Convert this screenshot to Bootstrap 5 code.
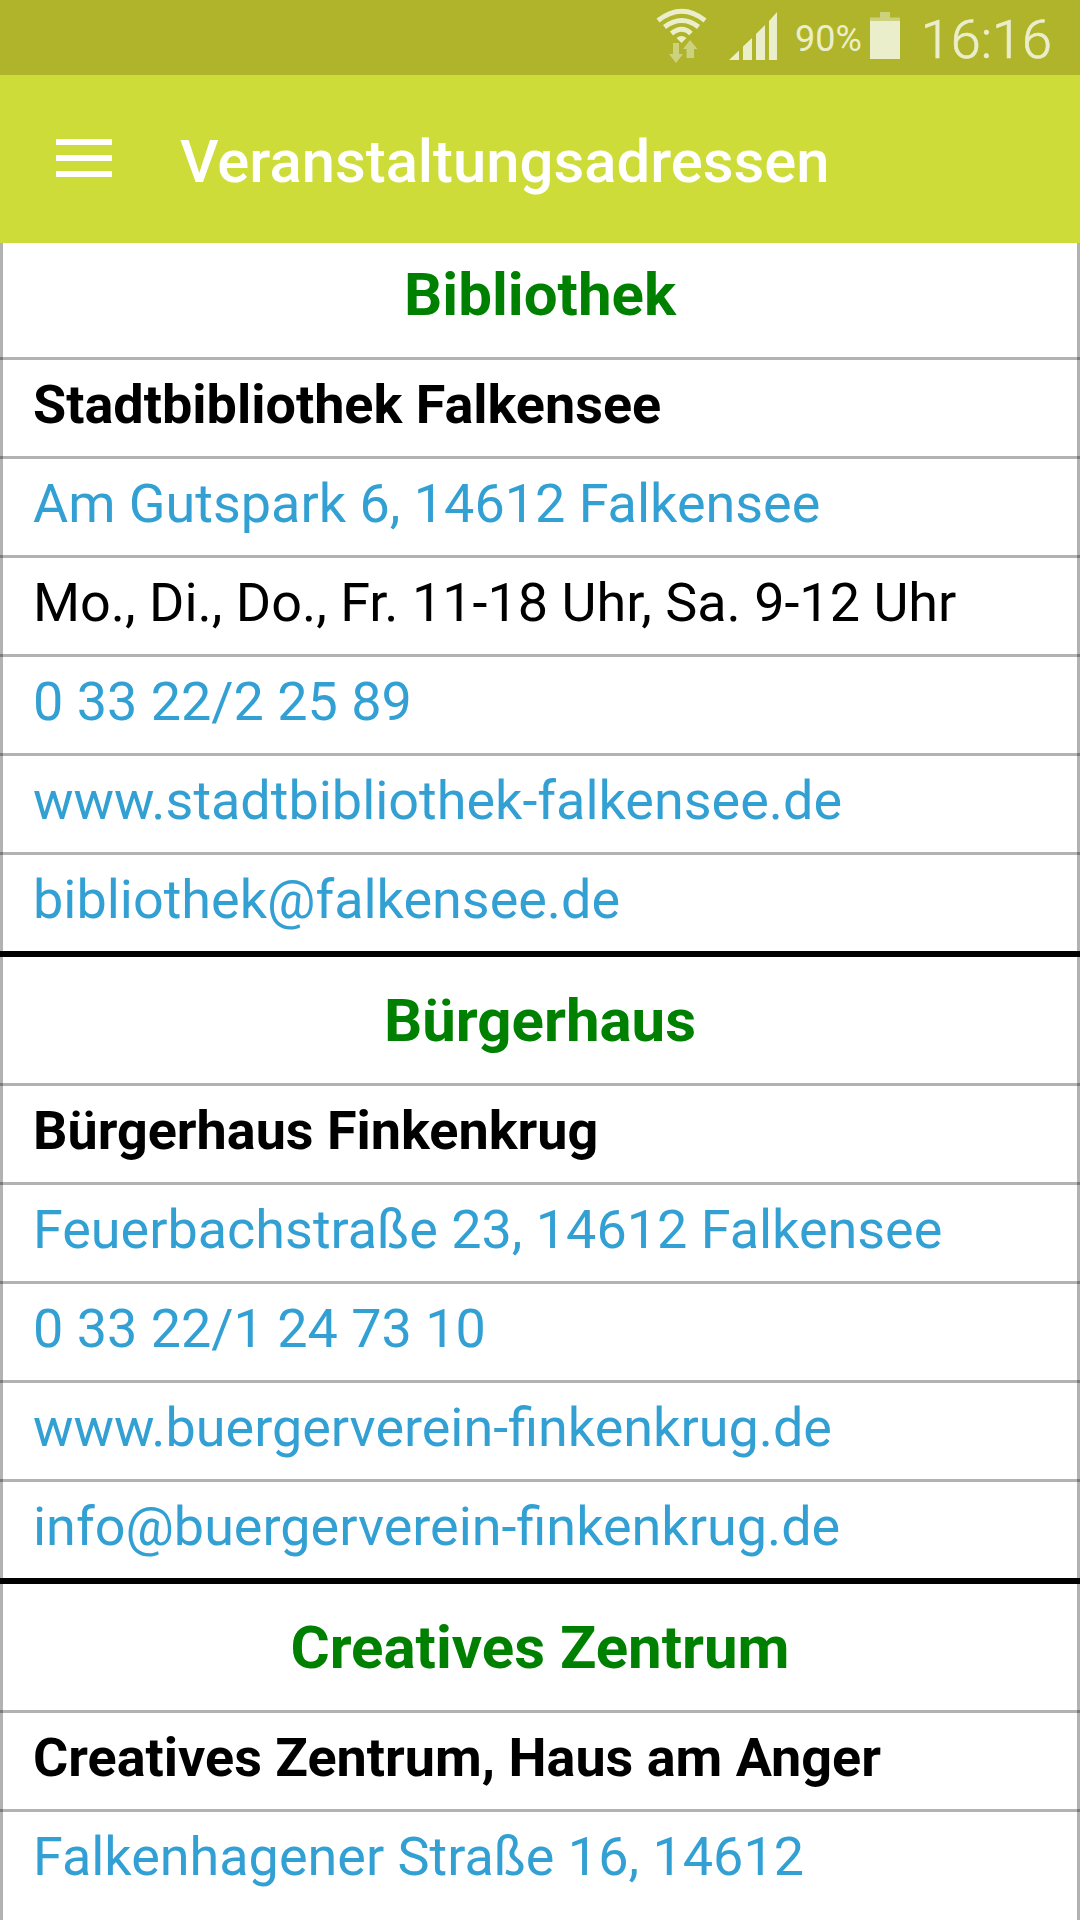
<!DOCTYPE html>
<html lang="de">
<head>
<meta charset="utf-8">
<meta name="viewport" content="width=device-width, initial-scale=1">
<title>Veranstaltungsadressen</title>
<link href="https://cdn.jsdelivr.net/npm/bootstrap@5.3.0/dist/css/bootstrap.min.css" rel="stylesheet">
<style>
body { font-family: Roboto, "Noto Sans", sans-serif; height: 1920px; overflow: hidden; color: #000; }
.statusbar { height: 75px; background: #afb42b; color: #ebeecb; padding-right: 28px; }
.st-icon { display: block; flex: none; }
.st-percent { font-size: 36px; line-height: 75px; margin: 2px 8px 0 5px; }
.st-clock { font-size: 54px; line-height: 79px; margin-left: 21px; font-weight: 300; -webkit-text-stroke: .7px #ebeecb; }
.appbar { height: 168px; background: #cddc39; padding: 0 56px; }
.menu-btn { width: 56px; line-height: 0; margin-top: -2px; }
.appbar h1 { font-size: 59.8px; font-weight: 500; line-height: 70px; margin-left: 68px; padding-top: 5px; }
.addresses { height: 1677px; border: solid rgba(0,0,0,.3); border-width: 0 3px; overflow: visible; }
.addr-row, .addr-head { margin: 0 -3px; padding: 0 33px; border-bottom: 3px solid rgba(0,0,0,.3); white-space: nowrap; }
.addr-row { height: 99px; font-size: 53.94px; line-height: 90px; }
.addr-head { height: 129px; font-size: 60px; line-height: 127px; font-weight: 700; color: #008000; text-align: center; }
.addr-group:first-child .addr-head { height: 117px; line-height: 103px; }
.addr-group:not(:last-child) .addr-row:last-child { height: 102px; border-bottom: 6px solid #000; }
.addr-group:last-child .addr-row:last-child { border-bottom: 0; }
a.addr-row { color: #33a0d4; }
</style>
<script src="https://cdn.jsdelivr.net/npm/bootstrap@5.3.0/dist/js/bootstrap.bundle.min.js"></script>
</head>
<body class="bg-white">
<div class="statusbar d-flex justify-content-end">
  <svg class="st-icon" width="150" height="75" viewBox="0 0 150 75">
    <g fill="none" stroke="#ebeecb" stroke-width="5">
      <path d="M18 20.5Q42 2 65 20.5"/>
      <path d="M24.500 27Q42 14 58.500 27"/>
      <path d="M31.500 33.500Q42 25 51 33.500"/>
    </g>
    <path d="M36.500 38Q41.500 34 46.500 38L41.500 43Z" fill="#ebeecb"/>
    <path d="M33 43h6v11h4L36 63l-7-9h4zM46.500 58h7.500V49h3.500L50 40l-7 9h3.500z" fill="#ccd17d"/>
    <path d="M89 60L99 50.500V60zM103 60V46.500L112 38V60zM116 60V34L125 25V60zM129 60V21L137 12V60z" fill="#ebeecb"/>
  </svg>
  <span class="st-percent">90%</span>
  <svg class="st-icon" width="30" height="75" viewBox="0 0 30 75">
    <path d="M0 17.500H10V12H20V17.500H30V21H0z" fill="#ccd17d"/>
    <path d="M0 21H30V59H0z" fill="#ebeecb"/>
  </svg>
  <span class="st-clock">16:16</span>
</div>
<header class="appbar d-flex align-items-center">
  <button class="menu-btn btn p-0 border-0 rounded-0" type="button" aria-label="Menü">
    <svg width="56" height="38" viewBox="0 0 56 38"><path d="M0 0H56V6H0zM0 16H56V22H0zM0 32H56V38H0z" fill="#fff"/></svg>
  </button>
  <h1 class="text-white mb-0">Veranstaltungsadressen</h1>
</header>
<main class="addresses">
  <section class="addr-group">
    <h2 class="addr-head mb-0">Bibliothek</h2>
    <div class="addr-row fw-bold">Stadtbibliothek Falkensee</div>
    <a class="addr-row d-block text-decoration-none" href="#">Am Gutspark 6, 14612 Falkensee</a>
    <div class="addr-row">Mo., Di., Do., Fr. 11-18 Uhr, Sa. 9-12 Uhr</div>
    <a class="addr-row d-block text-decoration-none" href="#">0 33 22/2 25 89</a>
    <a class="addr-row d-block text-decoration-none" href="#">www.stadtbibliothek-falkensee.de</a>
    <a class="addr-row d-block text-decoration-none" href="#">bibliothek@falkensee.de</a>
  </section>
  <section class="addr-group">
    <h2 class="addr-head mb-0">Bürgerhaus</h2>
    <div class="addr-row fw-bold">Bürgerhaus Finkenkrug</div>
    <a class="addr-row d-block text-decoration-none" href="#">Feuerbachstraße 23, 14612 Falkensee</a>
    <a class="addr-row d-block text-decoration-none" href="#">0 33 22/1 24 73 10</a>
    <a class="addr-row d-block text-decoration-none" href="#">www.buergerverein-finkenkrug.de</a>
    <a class="addr-row d-block text-decoration-none" href="#">info@buergerverein-finkenkrug.de</a>
  </section>
  <section class="addr-group">
    <h2 class="addr-head mb-0">Creatives Zentrum</h2>
    <div class="addr-row fw-bold">Creatives Zentrum, Haus am Anger</div>
    <a class="addr-row d-block text-decoration-none" href="#">Falkenhagener Straße 16, 14612</a>
  </section>
</main>
</body>
</html>
